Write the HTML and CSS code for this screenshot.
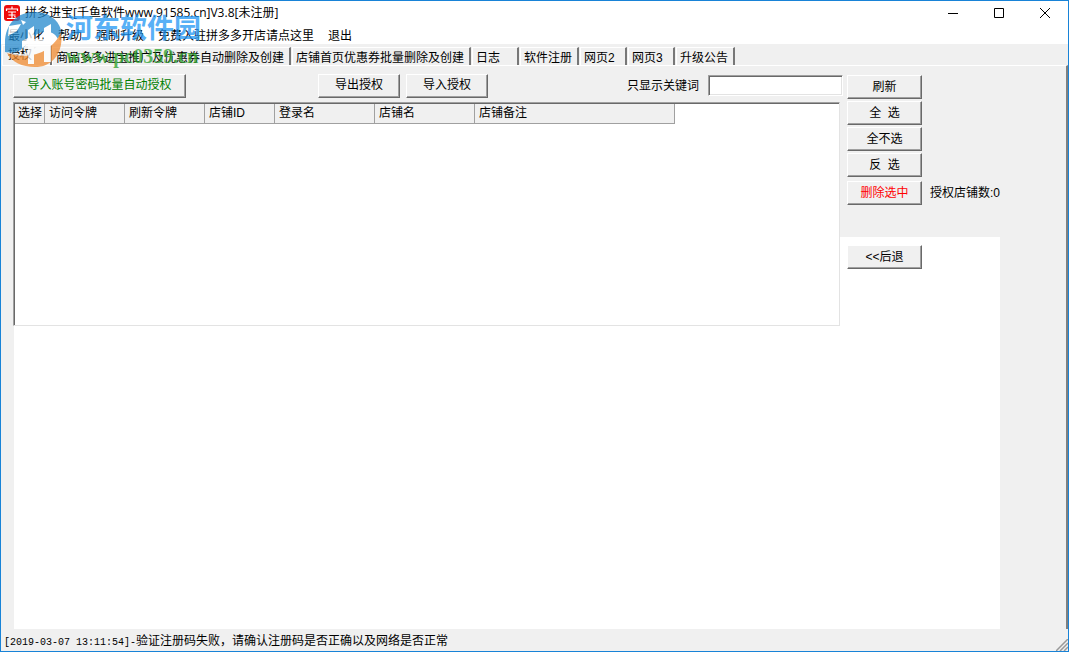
FILE: index.html
```html
<!DOCTYPE html>
<html lang="zh-CN">
<head>
<meta charset="utf-8">
<meta name="viewport" content="width=device-width, initial-scale=1">
<title>拼多进宝</title>
<link rel="stylesheet" href="styles.css">
</head>
<body>
<div class="window">
  <header class="titlebar">
    <svg class="app-icon" viewBox="0 0 16 16" aria-hidden="true">
      <rect width="16" height="16" rx="3" fill="#ed0c0c"/>
      <path d="M8 1.500v2M2.500 6V4h11v2M4 7h8M4.500 10h7M3 13.500h10M8 7v6.500M10.500 11l1 1.500" fill="none" stroke="#fff" stroke-width="1.200"/>
    </svg>
    <h1 class="title">拼多进宝[千鱼软件www.91585.cn]V3.8[未注册]</h1>
    <div class="controls">
      <button class="control" type="button" aria-label="最小化"><svg viewBox="0 0 10 10"><path d="M0 5.500h10"/></svg></button>
      <button class="control" type="button" aria-label="最大化"><svg viewBox="0 0 10 10"><path d="M.5.5h9v9h-9z"/></svg></button>
      <button class="control" type="button" aria-label="关闭"><svg viewBox="0 0 10 10"><path d="M0 0l10 10M10 0L0 10"/></svg></button>
    </div>
  </header>
  <nav class="menu">
    <button type="button">最小化</button>
    <button type="button">帮助</button>
    <button type="button">强制升级</button>
    <button type="button">免费入驻拼多多开店请点这里</button>
    <button type="button">退出</button>
  </nav>
  <div class="tabs" role="tablist">
    <button class="tab selected" type="button" role="tab" aria-selected="true">授权</button>
    <button class="tab" type="button" role="tab">商品多多进宝推广及优惠券自动删除及创建</button>
    <button class="tab" type="button" role="tab">店铺首页优惠券批量删除及创建</button>
    <button class="tab" type="button" role="tab">日志</button>
    <button class="tab" type="button" role="tab">软件注册</button>
    <button class="tab" type="button" role="tab">网页2</button>
    <button class="tab" type="button" role="tab">网页3</button>
    <button class="tab" type="button" role="tab">升级公告</button>
  </div>
  <main class="panel">
    <div class="web-view"></div>
    <div class="toolbar">
      <button class="btn batch" type="button">导入账号密码批量自动授权</button>
      <div class="transfer">
        <button class="btn" type="button">导出授权</button>
        <button class="btn" type="button">导入授权</button>
      </div>
      <label class="filter-label" for="keyword">只显示关键词</label>
      <input class="filter" id="keyword" type="text">
    </div>
    <div class="list">
      <table class="shops">
        <colgroup><col class="c-pick"><col class="c-token"><col class="c-token"><col class="c-id"><col class="c-name"><col class="c-name"><col class="c-note"></colgroup>
        <thead><tr><th>选择</th><th>访问令牌</th><th>刷新令牌</th><th>店铺ID</th><th>登录名</th><th>店铺名</th><th>店铺备注</th></tr></thead>
      </table>
    </div>
    <div class="side">
      <div class="side-group">
        <button class="btn" type="button">刷新</button>
        <button class="btn" type="button">全&nbsp; 选</button>
        <button class="btn" type="button">全不选</button>
        <button class="btn" type="button">反&nbsp; 选</button>
      </div>
      <div class="remove">
        <button class="btn danger" type="button">删除选中</button>
        <span>授权店铺数:0</span>
      </div>
    </div>
    <div class="back"><button class="btn" type="button">&lt;&lt;后退</button></div>
  </main>
  <footer class="status">
    <span><span class="mono">[2019-03-07 13:11:54]-</span>验证注册码失败，请确认注册码是否正确以及网络是否正常</span>
    <svg class="grip" viewBox="0 0 12 12" aria-hidden="true"><path d="M0 12L12 0M4 12l8-8M8 12l4-4" stroke="#999" stroke-width="1.500"/></svg>
  </footer>
  <div class="watermark" aria-hidden="true">
    <svg class="mark-logo" viewBox="0 0 58 58">
      <path d="M0 33C0 14 12 2 30 2c13 0 23 7 26 18 1 5 0 8-2 11-3-7-8-10-15-9-10 1-14 9-20 15-5 5-11 7-19 5z" fill="#2489cd"/>
      <path d="M2 42c13 5 25 1 32-8 5-7 11-9 20-4 0 9-8 17-20 19-12 1-24 0-32-7z" fill="#fff"/>
      <path d="M2 43c15 5 30 3 40-4 7-5 11-10 14-17 3 20-8 35-26 35-13 0-23-5-28-14z" fill="#f18b31"/>
      <path d="M4 16l12-2-4 7-9 5zM16 10l5 2-3 3zM23 20l6-4v13h10V18l7-4v38h-7V37H29v17h-6V34l-6 4v-7l6-3z" fill="#fff"/>
    </svg>
    <div class="mark-text">
      <span class="mark-name">河东软件园</span>
      <span class="mark-site">www.pc0359.cn</span>
    </div>
  </div>
</div>
</body>
</html>
```
FILE: styles.css
```css
* { box-sizing: border-box; }

body {
  margin: 0;
  color: #000;
  font: 12px/16px "Liberation Sans", "Noto Sans CJK SC", sans-serif;
}

button, input {
  margin: 0;
  padding: 0;
  border: 0;
  border-radius: 0;
  background: none;
  color: inherit;
  font: inherit;
  white-space: nowrap;
}

.mono { font: 10px/16px "Liberation Mono", monospace; }

.window {
  position: relative;
  display: flex;
  flex-direction: column;
  min-height: 100vh;
  border: 1px solid #1883d7;
  background: #f0f0f0;
}

.titlebar {
  display: flex;
  align-items: center;
  height: 25px;
  padding: 0 0 1px 3px;
  background: #fff;
}

.app-icon { width: 16px; height: 16px; }

.title {
  flex: 1;
  margin: 0 0 0 5px;
  font: 12px/16px "Open Sans", "Noto Sans CJK SC", sans-serif;
  white-space: nowrap;
}

.controls { display: flex; }

.control {
  display: grid;
  place-items: center;
  width: 46px;
  height: 24px;
}

.control svg {
  width: 10px;
  height: 10px;
  fill: none;
  stroke: #000;
}

.menu {
  display: flex;
  gap: 14px;
  height: 18px;
  padding: 2px 0 0 7px;
  background: #fff;
}

.tabs {
  display: flex;
  align-items: flex-end;
  height: 21px;
  padding-left: 1px;
}

.tab {
  height: 18px;
  min-width: 47px;
  margin-right: 1px;
  padding: 2px 5px 0 3px;
  border-top: 1px solid #fff;
  border-left: 1px solid #fff;
  border-right: 2px solid #777;
  text-align: left;
}

.tab.selected {
  height: 20px;
  width: 50px;
  margin-right: 0;
  padding: 0 0 1px 5px;
}

.panel {
  flex: 1;
  display: grid;
  grid-template-columns: 1fr 157px;
  grid-template-rows: 36px 135px 89px minmax(0, 1fr);
  padding: 0 66px 0 11px;
  margin-left: 1px;
  border-top: 1px solid #fff;
  border-right: 2px solid #808080;
}

.web-view {
  grid-area: 3 / 1 / 5 / 3;
  margin-left: 1px;
  background: #fff;
}

.toolbar {
  grid-area: 1 / 1 / 2 / 2;
  display: flex;
  align-items: center;
  padding-top: 3px;
}

.btn {
  flex-shrink: 0;
  width: 75px;
  height: 24px;
  padding-bottom: 1px;
  border: 1px solid;
  border-color: #fff #696969 #696969 #fff;
  box-shadow: inset -1px -1px #a0a0a0;
  background: #f0f0f0;
  line-height: 16px;
}

.toolbar .btn { width: 82px; }
.toolbar .batch { width: 173px; color: #008000; }

.transfer {
  display: flex;
  gap: 6px;
  margin-left: 132px;
}

.filter-label { margin-left: auto; }

.filter {
  width: 135px;
  height: 21px;
  margin-left: 9px;
  padding: 0 3px;
  border: 1px solid;
  border-color: #a0a0a0 #fff #fff #a0a0a0;
  box-shadow: inset 1px 1px #696969, inset -1px -1px #e3e3e3;
  background: #fff;
}

.list {
  grid-area: 2 / 1 / 4 / 2;
  margin-right: 3px;
  border: 1px solid;
  border-color: #a0a0a0 #e3e3e3 #e3e3e3 #a0a0a0;
  box-shadow: inset 1px 1px #696969;
  padding: 1px 0 0 1px;
  background: #fff;
}

.shops {
  width: 660px;
  table-layout: fixed;
  border-spacing: 0;
}

.shops th {
  height: 20px;
  padding: 0 0 2px 4px;
  border-right: 1px solid #a0a0a0;
  border-bottom: 1px solid #a0a0a0;
  background: #f0f0f0;
  font-weight: 400;
  text-align: left;
  white-space: nowrap;
}

.shops th:first-child { padding-left: 3px; }
.c-pick { width: 30px; }
.c-token { width: 80px; }
.c-id { width: 70px; }
.c-name { width: 100px; }
.c-note { width: 200px; }

.side {
  grid-area: 1 / 2 / 3 / 3;
  display: flex;
  flex-direction: column;
  gap: 4px;
  padding: 9px 0 0 4px;
}

.side-group {
  display: grid;
  gap: 2px;
  justify-items: start;
}

.remove {
  display: flex;
  align-items: center;
  gap: 8px;
  white-space: nowrap;
}

.danger { color: #f00; }

.back {
  grid-area: 3 / 2 / 4 / 3;
  padding: 8px 0 0 4px;
}

.status {
  display: flex;
  align-items: center;
  justify-content: space-between;
  height: 22px;
  padding: 4px 0 0 3px;
}

.grip {
  align-self: flex-end;
  width: 12px;
  height: 12px;
}

.watermark {
  position: absolute;
  top: 9px;
  left: 4px;
  display: flex;
  gap: 3px;
  opacity: 0.75;
  pointer-events: none;
}

.mark-logo { width: 58px; height: 58px; }

.mark-text {
  display: flex;
  flex-direction: column;
}

.mark-name {
  color: #2196f3;
  font: bold 27px/34px "Noto Sans CJK SC", sans-serif;
}

.mark-site {
  color: #2ba02b;
  font: bold 20px/24px "Liberation Serif", serif;
}
```
